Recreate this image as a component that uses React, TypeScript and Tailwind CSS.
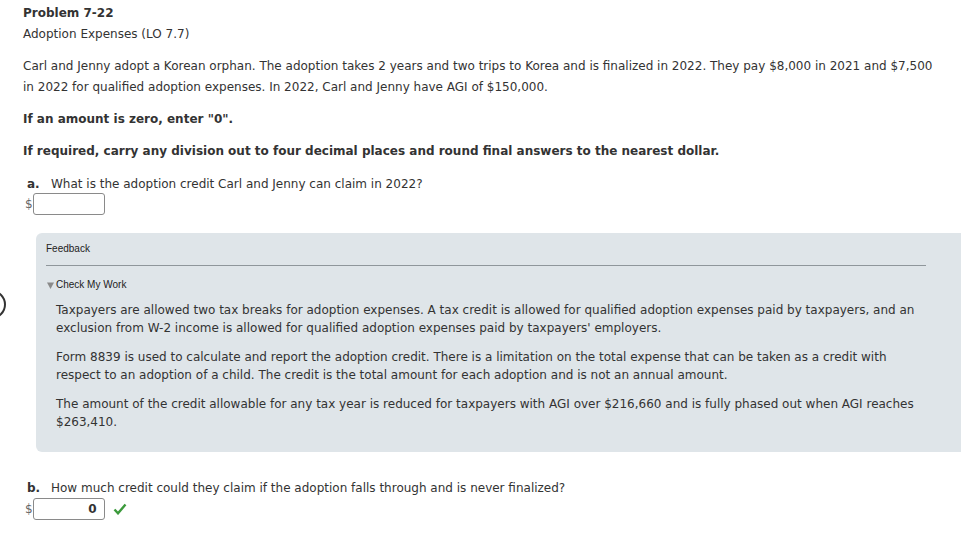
import React from "react";

const verdana = { fontFamily: '"DejaVu Sans", Verdana, sans-serif' };
const arial = { fontFamily: '"Liberation Sans", Arial, sans-serif' };

function MoneyInput({ value }: { value?: string }) {
  return (
    <div className="flex items-center">
      <span className="text-[12px] text-[#666]">$</span>
      <div className="w-[72px] h-[22px] border border-[#8a8a8a] rounded-[3px] bg-white flex items-center justify-end pr-[7px] text-[12px] font-bold text-[#333]">
        {value}
      </div>
    </div>
  );
}

export default function App() {
  return (
    <div className="relative w-[961px] h-[534px] overflow-hidden bg-white text-[#333]" style={verdana}>
      {/* circle edge peeking in on the left */}
      <div className="absolute left-[-26px] top-[290px] w-[32px] h-[29px] rounded-full border-[2px] border-[#333]" />

      <div className="pl-[23px] pt-[4px]">
        <div className="text-[12px] font-bold leading-[18px]">Problem 7-22</div>
        <div className="text-[12px] leading-[18px] mt-[3px]">Adoption Expenses (LO 7.7)</div>

        <p className="mt-[13px] w-[915px] text-[12px] leading-[21px]">
          Carl and Jenny adopt a Korean orphan. The adoption takes 2 years and two trips to Korea and is finalized in 2022. They pay $8,000 in 2021 and $7,500 in 2022 for qualified adoption expenses. In 2022, Carl and Jenny have AGI of $150,000.
        </p>

        <p className="mt-[11px] text-[12px] font-bold leading-[21px]">If an amount is zero, enter "0".</p>
        <p className="mt-[11px] text-[12px] font-bold leading-[21px]">
          If required, carry any division out to four decimal places and round final answers to the nearest dollar.
        </p>

        <div className="mt-[12px] pl-[4px] flex text-[12px] leading-[20px]">
          <span className="font-bold w-[24px]">a.</span>
          <span>What is the adoption credit Carl and Jenny can claim in 2022?</span>
        </div>
        <div className="pl-[2px] mt-[-1px]">
          <MoneyInput />
        </div>
      </div>

      {/* Feedback panel */}
      <div className="ml-[36px] mt-[18px] bg-[#dfe5e9] rounded-l-[6px] pt-[9px] pb-[21px] pl-[10px]">
        <div className="text-[10px] text-[#222] leading-[14px]" style={arial}>
          Feedback
        </div>
        <div className="mt-[9px] mr-[35px] border-t border-[#8f969b]" />
        <div className="mt-[12px] flex items-center text-[10px] text-[#222] leading-[14px]" style={arial}>
          <svg width="7" height="7" viewBox="0 0 7 7" className="ml-[1px] mr-[2px]">
            <path d="M0 0.5h7L3.5 7z" fill="#8a8a8a" />
          </svg>
          Check My Work
        </div>
        <div className="pl-[10px] pr-[30px] text-[12px] leading-[18px]">
          <p className="mt-[9px]">
            Taxpayers are allowed two tax breaks for adoption expenses. A tax credit is allowed for qualified adoption expenses paid by taxpayers, and an exclusion from W-2 income is allowed for qualified adoption expenses paid by taxpayers' employers.
          </p>
          <p className="mt-[11px]">
            Form 8839 is used to calculate and report the adoption credit. There is a limitation on the total expense that can be taken as a credit with respect to an adoption of a child. The credit is the total amount for each adoption and is not an annual amount.
          </p>
          <p className="mt-[11px]">
            The amount of the credit allowable for any tax year is reduced for taxpayers with AGI over $216,660 and is fully phased out when AGI reaches $263,410.
          </p>
        </div>
      </div>

      <div className="pl-[23px] mt-[26px]">
        <div className="pl-[4px] flex text-[12px] leading-[20px]">
          <span className="font-bold w-[24px]">b.</span>
          <span>How much credit could they claim if the adoption falls through and is never finalized?</span>
        </div>
        <div className="pl-[2px] flex items-center">
          <MoneyInput value="0" />
          <svg width="14" height="12" viewBox="0 0 14 12" className="ml-[8px]">
            <path d="M1.5 6.5l3.5 3.8L12.5 1.5" fill="none" stroke="#3c9a3c" strokeWidth="2.4" />
          </svg>
        </div>
      </div>
    </div>
  );
}
